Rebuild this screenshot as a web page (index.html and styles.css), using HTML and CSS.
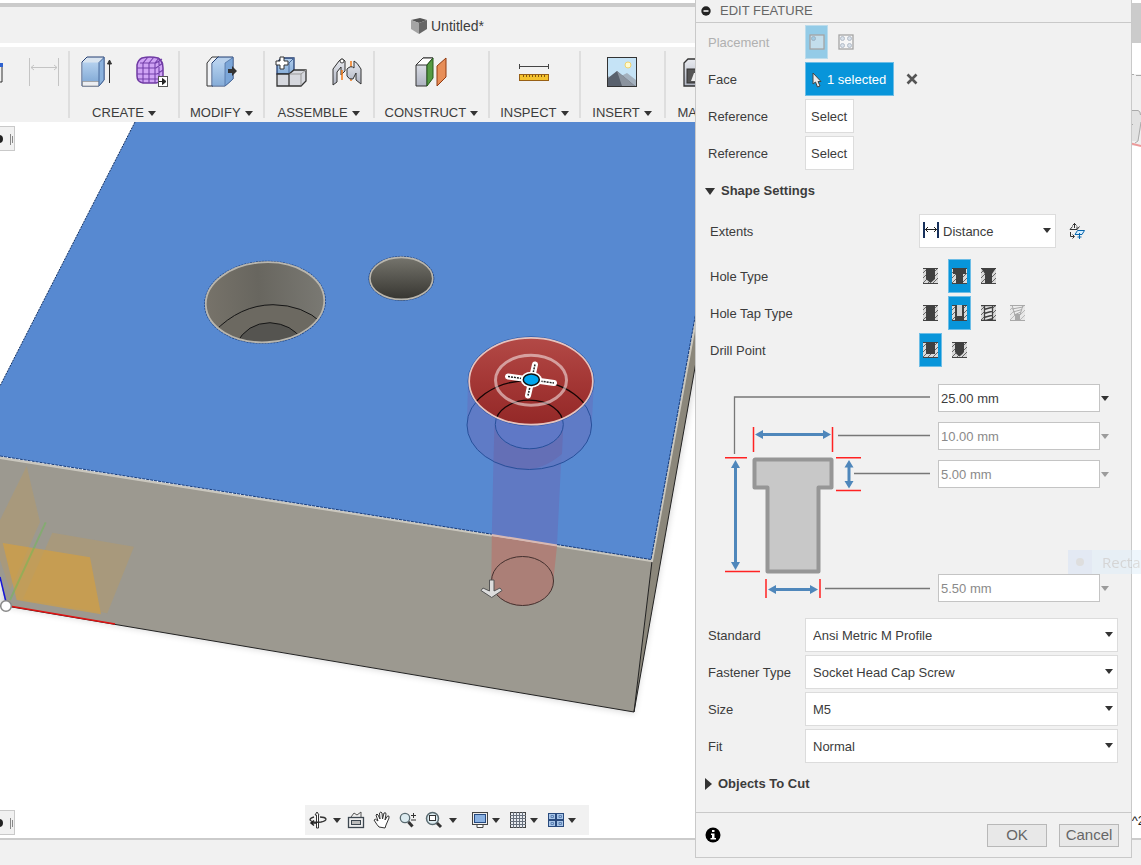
FILE: index.html
```html
<!DOCTYPE html>
<html lang="en">
<head>
<meta charset="utf-8">
<title>Untitled*</title>
<link rel="stylesheet" href="styles.css">
</head>
<body>
<svg class="defs" width="0" height="0" aria-hidden="true">
  <defs>
    <pattern id="hatch" width="5" height="5" patternUnits="userSpaceOnUse">
      <rect width="5" height="5" fill="#dadada"/>
      <path d="M-1 6L6 -1M-1 1L1 -1M4 6L6 4" stroke="#666" stroke-width="1"/>
    </pattern>
    <linearGradient id="glass" x1="0" y1="0" x2="0" y2="1"><stop offset="0" stop-color="#b4d0ee"/><stop offset="1" stop-color="#86add8"/></linearGradient>
    <linearGradient id="steel" x1="0" y1="0" x2="0" y2="1"><stop offset="0" stop-color="#e9ebf0"/><stop offset="1" stop-color="#aeb3c1"/></linearGradient>
  </defs>
</svg>
<div class="app">
  <header class="top">
    <div class="titlebar">
      <svg class="doc-icon" width="18" height="18" viewBox="0 0 18 18" aria-hidden="true">
        <path d="M1 3L10 1L17 3L9 6Z" fill="#555"/><path d="M1 3L9 6V17L1 12Z" fill="#a4a4a4"/><path d="M9 6L17 3V12L9 17Z" fill="#666"/>
      </svg>
      <h1 class="doc-title">Untitled*</h1>
    </div>
    <div class="title-end"></div>
  </header>

  <nav class="ribbon" aria-label="Tools">
    <section class="group group-first">
      <div class="tools">
        <svg width="4" height="32" viewBox="0 0 4 32"><path d="M0 9H2V26H0" fill="none" stroke="#333"/><rect x="0" y="7" width="3" height="4" fill="#2f62d0"/></svg>
        <svg width="32" height="32" viewBox="0 0 32 32"><path d="M1.500 2V30M30.500 2V30M3 11.500H29M6 9L3 11.500L6 14M26 9L29 11.500L26 14" fill="none" stroke="#c4c4c4"/></svg>
      </div>
    </section>
    <section class="group">
      <div class="tools">
        <svg width="32" height="32" viewBox="0 0 32 32"><path d="M2 6L7 1H24V24L19 30H2Z" fill="#d9e4f0" stroke="#243f72"/><path d="M2.500 6.500H19V25H2.500Z" fill="url(#glass)"/><path d="M2.500 25.500H19V30H2.500Z" fill="#eceef2" stroke="#777" stroke-width=".6"/><path d="M19 6.500L24 1.500V24L19 30Z" fill="#8bb2dd" stroke="#4a6a9c"/><path d="M29.500 27V5M27.500 8L29.500 4L31.500 8Z" stroke="#333" fill="#333"/></svg>
        <svg width="32" height="32" viewBox="0 0 32 32"><path d="M6 2Q14 0 22 2Q27 5 27 12V20Q26 26 20 27H7Q1 26 1 20V9Q2 4 6 2Z" fill="#cfa3f5" stroke="#6f3aa3" stroke-width="1.500"/><path d="M1 12H20L27 7M1 18H21L27 14M2 23H22L27 20M7 7V27M13 7V27M19 7V27M4 7H20L26 3M7 7L12 1M13 7L18 1M19 7L23 2M23 5V25" fill="none" stroke="#7340aa" stroke-width="1.100"/><rect x="22.500" y="20.500" width="9" height="10" fill="#fff" stroke="#555"/><path d="M23 25.500H29M26.500 22.500L30 25.500L26.500 28.500Z" stroke="#222" fill="#222"/></svg>
      </div>
      <button class="menu" type="button">CREATE<i class="tri"></i></button>
    </section>
    <section class="group">
      <div class="tools">
        <svg width="32" height="32" viewBox="0 0 32 32"><path d="M2 7L7 1H14L8 7V30H2Z" fill="#f1f3f6" stroke="#333"/><path d="M7 7L13 1H28V23L20 30H7Z" fill="#b7d0ec" stroke="#203c70"/><path d="M7.500 7H20V29.500H7.500Z" fill="url(#glass)"/><path d="M20 7L28 1.500V23L20 30Z" fill="#7ba6d8" stroke="#47699b" stroke-width=".7"/><path d="M23 13H27V10L32 15L27 20V17H23Z" fill="#333"/></svg>
      </div>
      <button class="menu" type="button">MODIFY<i class="tri"></i></button>
    </section>
    <section class="group">
      <div class="tools">
        <svg width="32" height="32" viewBox="0 0 32 32"><path d="M2 7L6 2H19V14L15 18H2Z" fill="url(#glass)" stroke="#233e72" stroke-width="1.300"/><path d="M14 7L19 2M14 7V18" stroke="#47699b"/><path d="M2 18H14V30H2ZM14 18L19 14H31V25L26 30H14Z" fill="#d6d8de" stroke="#333" stroke-width="1.300"/><path d="M14.700 18H26V29.300M26 18L31 14" fill="none" stroke="#999"/><path d="M5 1H9V5H13V9H9V13H5V9H1V5H5Z" fill="#fff" stroke="#333"/></svg>
        <svg width="32" height="32" viewBox="0 0 32 32"><path d="M2 13L8 5Q11 1 14 5V15L10 19V11L6 16V26L2 29Z" fill="url(#steel)" stroke="#333"/><circle cx="11" cy="5" r="2" fill="#fff" stroke="#444"/><path d="M11 14V24M20 5V25" stroke="#f47a16" stroke-width="1.500"/><path d="M16 13Q20 9 23 12V5Q26 6 30 13V28L25 24V17L22 23Q18 24 16 20Z" fill="url(#steel)" stroke="#333"/></svg>
      </div>
      <button class="menu" type="button">ASSEMBLE<i class="tri"></i></button>
    </section>
    <section class="group">
      <div class="tools">
        <svg width="32" height="32" viewBox="0 0 32 32"><path d="M1 9L8 2H18L12 9V30H1Z" fill="url(#steel)" stroke="#333"/><path d="M1 9L8 2H18L12 9Z" fill="#fff" stroke="#333"/><path d="M12 9L18 2V22L12 30Z" fill="#559b43" stroke="#265a1d"/><path d="M22 10L31 2V21L22 30Z" fill="#e78e58" stroke="#923a10"/></svg>
      </div>
      <button class="menu" type="button">CONSTRUCT<i class="tri"></i></button>
    </section>
    <section class="group">
      <div class="tools">
        <svg width="32" height="32" viewBox="0 0 32 32"><path d="M1.500 8V13M30.500 8V13M2 10.500H30" stroke="#444"/><rect x="1.500" y="18.500" width="29" height="6" fill="#f4c22d" stroke="#986015"/><path d="M5.500 19V21M8.500 19V21M11.500 19V21M14.500 19V21M17.500 19V21M20.500 19V21M23.500 19V21M26.500 19V21" stroke="#825411"/></svg>
      </div>
      <button class="menu" type="button">INSPECT<i class="tri"></i></button>
    </section>
    <section class="group group-insert">
      <div class="tools">
        <svg width="32" height="32" viewBox="0 0 32 32"><rect x="1.500" y="1.500" width="29" height="29" fill="#c5e3f6" stroke="#333"/><circle cx="22" cy="9" r="3" fill="#fffbd0" stroke="#f2d36d"/><path d="M2 20L6 22L11 15L15 20L21 17L30 24V30H2Z" fill="#a4b1be"/><path d="M2 22L11 15L17 20L29 30H2Z" fill="#59616d"/><path d="M11 15L17 20L29 30H16Z" fill="#8b939e"/></svg>
      </div>
      <button class="menu" type="button">INSERT<i class="tri"></i></button>
    </section>
    <section class="group group-make">
      <div class="tools">
        <svg width="32" height="32" viewBox="0 0 32 32"><path d="M2 7L6 3H28V26L25 30H2Z" fill="url(#steel)" stroke="#333" stroke-width="1.300"/><rect x="5" y="13" width="20" height="14" fill="#555" stroke="#333"/><path d="M9 25L12 17H20V25Z" fill="#eee"/></svg>
      </div>
      <button class="menu" type="button">MAKE<i class="tri"></i></button>
    </section>
  </nav>

  <main class="canvas">
    <svg class="scene" viewBox="0 122 1141 716" preserveAspectRatio="xMinYMin slice" role="img" aria-label="Plate with two holes and a counterbore preview">
      <defs>
        <linearGradient id="bore" x1="0" y1="0" x2="1" y2="0"><stop offset="0" stop-color="#77736a"/><stop offset=".45" stop-color="#68665f"/><stop offset="1" stop-color="#7a7973"/></linearGradient>
        <linearGradient id="pit" x1="0" y1="0" x2="0" y2="1"><stop offset="0" stop-color="#77766e"/><stop offset="1" stop-color="#35342f"/></linearGradient>
        <linearGradient id="red" x1="0" y1="0" x2="0" y2="1"><stop offset="0" stop-color="#b34a47"/><stop offset=".5" stop-color="#a43735"/><stop offset="1" stop-color="#932827"/></linearGradient>
        <clipPath id="clipBore"><ellipse cx="265" cy="302" rx="59" ry="40" transform="rotate(-3 265 302)"/></clipPath>
        <clipPath id="clipRed"><ellipse cx="531" cy="381" rx="62" ry="43.500"/></clipPath>
        <filter id="soft" x="-5%" y="-5%" width="110%" height="115%"><feGaussianBlur stdDeviation="3"/></filter>
      </defs>
      <path d="M0 606L634 714L696 376V330L640 550L0 480Z" fill="#000" opacity=".14" filter="url(#soft)"/>
      <path d="M135 122H730L652 560L0 456V386Z" fill="#5789d1"/>
      <path d="M135 122L0 386" stroke="#16315f" stroke-dasharray="2 1"/>
      <path d="M0 457L652 561L634 712L6 606L0 577Z" fill="#9c9990"/>
      <path d="M652 560L730 130V170L634 712Z" fill="#8b877b"/>
      <path d="M652 561L634 712L730 170" fill="none" stroke="#222"/>
      <path d="M6 606L634 712" stroke="#222"/>
      <path d="M0 458L652 561L730 134" fill="none" stroke="#cac7be" stroke-width="2"/>
      <path d="M0 456L651 559.500L729 130" fill="none" stroke="#183b78" stroke-dasharray="3 1"/>

      <path d="M0 520L26.700 466L40 522L10 590L0 560Z" fill="#c59a50" opacity=".3"/>
      <path d="M52.300 532.700L134 546.700L107.300 613.300L23 599Z" fill="#c59a50" opacity=".3"/>
      <path d="M2.700 543L90 557.300L101 614.300L16.700 600Z" fill="#d99f39" opacity=".62"/>
      <path d="M45.700 522.300L10 600" stroke="#6dbb55" stroke-width="2" opacity=".5"/>
      <path d="M0 577L6 602" stroke="#1717d8" stroke-width="1.500"/>
      <path d="M12 606.500L115 624" stroke="#e01212" stroke-width="1.500"/>
      <circle cx="6" cy="606" r="5.300" fill="#fff" stroke="#888" stroke-width="1.500"/>

      <ellipse cx="265" cy="302.300" rx="60" ry="41" transform="rotate(-3 265 302)" fill="url(#bore)"/>
      <g clip-path="url(#clipBore)">
        <path d="M214 332Q240 305 273 304.700Q303 305 322 323V350H214Z" fill="#6c6961" stroke="#161616"/>
        <path d="M236 344Q247 323 270 322.700Q292 324 302 340V350H236Z" fill="#555450" stroke="#161616"/>
      </g>
      <ellipse cx="265" cy="302.300" rx="60.500" ry="41" transform="rotate(-3 265 302)" fill="none" stroke="#1f4688" stroke-dasharray="2 1"/>
      <ellipse cx="265" cy="302.300" rx="59.300" ry="40" transform="rotate(-3 265 302)" fill="none" stroke="#b9b6ae" stroke-width="1.800"/>
      <ellipse cx="401.300" cy="278.400" rx="32.500" ry="22" fill="url(#pit)" stroke="#1f4688" stroke-dasharray="2 1"/>
      <ellipse cx="401.300" cy="278.400" rx="31.400" ry="21" fill="none" stroke="#b9b6ae" stroke-width="1.600"/>

      <path d="M468 381L467 425A62.300 44.500 0 0 0 591.700 425L594 381Z" fill="#5f7bc6"/>
      <path d="M494.300 423H563L557 545.500L491.800 535Z" fill="#6079c3"/>
      <path d="M494.500 424A34 24.300 0 0 0 563.300 424L562 454Q530 481 493.500 462Z" fill="#646fb6"/>
      <path d="M491.800 536L557 546L553.300 581A31 24.500 0 0 1 491.300 581Z" fill="#ae8078"/>
      <path d="M491.800 535L557 545.500" stroke="#d9b9b3" stroke-width="2"/>
      <ellipse cx="522.500" cy="581" rx="31" ry="24.500" fill="#ab7f77" stroke="#43302e"/>
      <ellipse cx="529.300" cy="425" rx="62.300" ry="44.500" fill="none" stroke="#27509b"/>
      <ellipse cx="529.300" cy="424.500" rx="34" ry="24.300" fill="#5f78c6" stroke="#27509b"/>
      <ellipse cx="531" cy="381.300" rx="62.500" ry="44" fill="url(#red)"/>
      <g clip-path="url(#clipRed)" fill="none" stroke="#160505" stroke-width="1.300">
        <ellipse cx="529.300" cy="425" rx="62.300" ry="44.500"/>
        <ellipse cx="529.300" cy="424.500" rx="34" ry="24.300"/>
      </g>
      <ellipse cx="531" cy="381.300" rx="63" ry="44.500" fill="none" stroke="#2c57a5"/>
      <ellipse cx="531" cy="381.300" rx="61.800" ry="43.400" fill="none" stroke="#e6c4bf" stroke-width="1.700"/>
      <ellipse cx="531" cy="380.300" rx="35.500" ry="25" fill="none" stroke="#fff" stroke-width="3" opacity=".5"/>
      <path d="M535 364.500L528 395.500M508 376.500L554 383" stroke="#fff" stroke-width="6" stroke-linecap="round"/>
      <path d="M535 364.500L528 395.500M508 376.500L554 383" stroke="#222" stroke-width="1.500" stroke-dasharray="2 1"/>
      <ellipse cx="531.300" cy="379.700" rx="10.500" ry="8" fill="#fff"/>
      <ellipse cx="531.300" cy="379.700" rx="8" ry="5.700" fill="#00a6ee" stroke="#111" stroke-width="1.500"/>
      <path d="M489.500 580H494V591L500 588L502 590.500L491.700 597.500L481 590.500L483 588L489.500 591Z" fill="#ddd" stroke="#555"/>
    </svg>
    <button class="tab tab-top" type="button" aria-label="Expand browser"><svg width="14" height="24" viewBox="0 0 14 24"><circle cx="-1" cy="12" r="4" fill="#222"/><path d="M10.500 7V18M12.500 9V16" stroke="#888"/></svg></button>
    <button class="tab tab-bottom" type="button" aria-label="Expand comments"><svg width="14" height="24" viewBox="0 0 14 24"><circle cx="-1" cy="12" r="4" fill="#222"/><path d="M10.500 7V18M12.500 9V16" stroke="#888"/></svg></button>
    <div class="navbar">
      <svg width="18" height="18" viewBox="0 0 18 18"><path d="M8 1L10 4H9.500V17H7.500V4H6Z" fill="#fff" stroke="#333"/><path d="M5 6Q1 7 1 9Q3 12 12 11Q17 10 17 8Q16 6 11 6" fill="none" stroke="#333" stroke-width="1.300"/><path d="M2 12H8M5 9.500L2 12L5 14.500" fill="none" stroke="#222" stroke-width="1.500"/></svg>
      <i class="tri"></i>
      <svg width="18" height="18" viewBox="0 0 18 18"><path d="M4 6L7 2L10 4L14 1V6" fill="#eee" stroke="#555"/><rect x="1.500" y="6.500" width="15" height="10" fill="#eee" stroke="#3d4750" stroke-width="1.300"/><rect x="4.500" y="9.500" width="9" height="4" fill="#bbb" stroke="#3d4750"/></svg>
      <svg class="hand" width="18" height="18" viewBox="0 0 18 18"><path d="M6 16Q4 14 1 9Q2 7 5 10L3 4Q4 2 5 4L7 8L6.500 2Q8 0 9 2L9.500 8L11 2Q13 1 13 3L12 9L14.500 5Q16.500 4 16 7L13 14L12 17Z" fill="#fff" stroke="#333"/></svg>
      <svg width="18" height="18" viewBox="0 0 18 18"><circle cx="6" cy="7" r="4.700" fill="#dcebf0" stroke="#596a70" stroke-width="1.300"/><path d="M9.500 11L13.500 15.500" stroke="#333" stroke-width="3"/><path d="M12 4.500H17M14.500 2V7M12 9H17" stroke="#333"/></svg>
      <svg class="zoom-fit" width="18" height="18" viewBox="0 0 18 18"><circle cx="7.500" cy="7.500" r="6" fill="#dcebf0" stroke="#596a70" stroke-width="1.500"/><rect x="4.500" y="4.500" width="6" height="5" fill="#fff" stroke="#333"/><path d="M12 12L16 16" stroke="#333" stroke-width="3"/></svg>
      <i class="tri"></i>
      <span class="view-menu view-menu-first"><svg width="18" height="18" viewBox="0 0 18 18"><rect x="1.500" y="1.500" width="15" height="12" fill="#eee" stroke="#444"/><rect x="3.500" y="3.500" width="11" height="8" fill="#8ab1e2" stroke="#274a80"/><path d="M6 14V16.500H12V14" fill="#fff" stroke="#444"/></svg><i class="tri"></i></span>
      <span class="view-menu"><svg width="18" height="18" viewBox="0 0 18 18"><rect x="1.500" y="1.500" width="15" height="15" fill="#e9ecf1" stroke="#444"/><path d="M4.500 1V17M7.500 1V17M10.500 1V17M13.500 1V17M1 4.500H17M1 7.500H17M1 10.500H17M1 13.500H17" stroke="#68707c"/></svg><i class="tri"></i></span>
      <span class="view-menu"><svg width="18" height="18" viewBox="0 0 18 18"><g fill="#a8c5e8" stroke="#294a7d"><rect x="1.500" y="2.500" width="7" height="6"/><rect x="9.500" y="2.500" width="7" height="6"/><rect x="1.500" y="9.500" width="7" height="6"/><rect x="9.500" y="9.500" width="7" height="6"/></g><path d="M4 4.500H6.500V6.500H4ZM12 4.500H14.500V6.500H12ZM4 11.500H6.500V13.500H4ZM12 11.500H14.500V13.500H12Z" fill="none" stroke="#5e83b5"/></svg><i class="tri"></i></span>
    </div>
    <span class="unit">^2</span>
  </main>
  <footer class="status"></footer>

  <svg class="viewcube" width="10" height="80" viewBox="0 0 10 80" aria-hidden="true">
    <path d="M0 4H10V76H0Z" fill="#f0f0f0"/>
    <path d="M0 40H7Q10 41 10 45V58L7 71H0Z" fill="#e2e2e2"/>
    <path d="M0 4.500H3M5 5.500H10M0 40.500H7Q9.500 41 9.500 45M0 54.500H2M10 52L7 71L4 73" fill="none" stroke="#aaa"/>
    <path d="M0 73.500L10 76" stroke="#ed9a9a" stroke-width="2"/>
  </svg>

  <form class="dialog" aria-label="Edit feature">
    <div class="dialog-head">
      <svg width="10" height="10" viewBox="0 0 10 10" aria-hidden="true"><circle cx="5" cy="5" r="4.700" fill="#222"/><path d="M2.500 5H7.500" stroke="#fff" stroke-width="1.500"/></svg>
      <h2 class="dialog-title">EDIT FEATURE</h2>
    </div>

    <div class="rows">
      <div class="row">
        <span class="label label-off">Placement</span>
        <div class="toggles">
          <button class="toggle toggle-on toggle-dim" type="button" aria-label="Single hole" aria-pressed="true"><svg width="16" height="16" viewBox="0 0 16 16"><rect x="1" y="1" width="14" height="14" fill="#7fc3e6" stroke="#333" stroke-width="1.300"/><circle cx="4.500" cy="4.500" r="2" fill="#2692cc" stroke="#25537d"/></svg></button>
          <button class="toggle toggle-dim" type="button" aria-label="Multiple holes"><svg width="16" height="16" viewBox="0 0 16 16"><rect x="1" y="1" width="14" height="14" fill="#fff" stroke="#333" stroke-width="1.300"/><g fill="#b7cae0" stroke="#566d8a"><circle cx="4.500" cy="4.500" r="2"/><circle cx="11.500" cy="4.500" r="2"/><circle cx="4.500" cy="11.500" r="2"/><circle cx="11.500" cy="11.500" r="2"/></g></svg></button>
        </div>
      </div>
      <div class="row">
        <span class="label">Face</span>
        <button class="pick pick-on" type="button"><svg width="10" height="16" viewBox="0 0 10 16" aria-hidden="true"><path d="M1 1V12L3.500 10L5.500 15L8 14L6 9.500H9Z" fill="#eee" stroke="#444"/></svg>1 selected</button>
        <button class="clear" type="button" aria-label="Clear face"><svg width="12" height="12" viewBox="0 0 12 12"><path d="M1.500 1.500L10.500 10.500M10.500 1.500L1.500 10.500" stroke="#555" stroke-width="2.600"/></svg></button>
      </div>
      <div class="row"><span class="label">Reference</span><button class="pick" type="button">Select</button></div>
      <div class="row"><span class="label">Reference</span><button class="pick" type="button">Select</button></div>
      <button class="fold" type="button" aria-expanded="true"><i class="tri tri-big"></i>Shape Settings</button>
    </div>

    <div class="rows rows-shape">
      <div class="row row-extents">
        <label class="label" for="extents">Extents</label>
        <span class="drop drop-short">
          <svg class="drop-icon" width="16" height="16" viewBox="0 0 16 16" aria-hidden="true"><path d="M1 0V16M15 0V16" stroke="#17315c" stroke-width="2"/><path d="M2 7.500H14M5 5L2.500 7.500L5 10M11 5L13.500 7.500L11 10" fill="none" stroke="#222"/></svg>
          <select id="extents" class="select select-icon"><option>Distance</option></select>
        </span>
        <button class="flip" type="button" aria-label="Flip direction"><svg width="16" height="16" viewBox="0 0 16 16"><path d="M5.500 0V5M3.500 2.500L5.500 .5L7.500 2.500M1 6.500H8L10.500 3.500M1 6.500L3.500 3.500M8 6.500V3.500M1.500 9V13.500H5M3.500 11.500L5.500 13.500L3.500 15.500" fill="none" stroke="#333"/><path d="M8.500 7.500H15.500L13 11.500H6Z" fill="#d5edff" stroke="#0867ad"/><path d="M10.500 10V16M8.500 14H12.500" stroke="#0867ad"/></svg></button>
      </div>
      <div class="row">
        <span class="label">Hole Type</span>
        <div class="toggles">
          <button class="toggle" type="button" aria-label="Simple"><svg width="16" height="16" viewBox="0 0 16 16"><rect width="15" height="16" fill="url(#hatch)"/><path d="M0 .5H15M0 15.500H15" stroke="#444"/><path d="M3 0H12V11L7.500 15L3 11Z" fill="#404040"/></svg></button>
          <button class="toggle toggle-on" type="button" aria-label="Counterbore" aria-pressed="true"><svg width="16" height="16" viewBox="0 0 16 16"><rect width="15" height="16" fill="url(#hatch)"/><path d="M0 .5H15M0 15.500H15" stroke="#444"/><path d="M1 0H14V6H11V16H4V6H1Z" fill="#404040"/></svg></button>
          <button class="toggle" type="button" aria-label="Countersink"><svg width="16" height="16" viewBox="0 0 16 16"><rect width="15" height="16" fill="url(#hatch)"/><path d="M0 .5H15M0 15.500H15" stroke="#444"/><path d="M0 0H15L11 6V16H4V6Z" fill="#404040"/></svg></button>
        </div>
      </div>
      <div class="row">
        <span class="label">Hole Tap Type</span>
        <div class="toggles">
          <button class="toggle" type="button" aria-label="Simple tap"><svg width="16" height="16" viewBox="0 0 16 16"><rect width="15" height="16" fill="url(#hatch)"/><path d="M0 .5H15M0 15.500H15" stroke="#444"/><rect x="3" width="9" height="16" fill="#404040"/></svg></button>
          <button class="toggle toggle-on" type="button" aria-label="Clearance" aria-pressed="true"><svg width="16" height="16" viewBox="0 0 16 16"><rect width="15" height="16" fill="url(#hatch)"/><path d="M0 .5H15M0 15.500H15" stroke="#444"/><rect x="3" width="9" height="16" fill="#404040"/><rect x="5" width="5" height="11" fill="#d0d0d0"/></svg></button>
          <button class="toggle" type="button" aria-label="Tapped"><svg width="16" height="16" viewBox="0 0 16 16"><rect width="15" height="16" fill="url(#hatch)"/><rect x="4" width="7" height="16" fill="#e6e6e6"/><path d="M0 .5H15M0 15.500H15M3.500 0V16M11.500 0V16M3 4.500L12 2M3 8.500L12 6M3 12.500L12 10M3 16L12 13.500" stroke="#404040" stroke-width="1.300"/></svg></button>
          <button class="toggle" type="button" aria-label="Taper tapped" disabled><svg width="16" height="16" viewBox="0 0 16 16"><rect width="15" height="16" fill="url(#hatch)"/><path d="M1 0H14L10 9H5Z" fill="#e8e8e8"/><path d="M0 .5H15M0 15.500H15M2 4L13 2M3 7L12 4.500M4 10L11 7M2 0L5 10M13 0L10 10" stroke="#404040"/><path d="M5 9H10V16H5Z" fill="#404040"/></svg></button>
        </div>
      </div>
      <div class="row">
        <span class="label">Drill Point</span>
        <div class="toggles">
          <button class="toggle toggle-on" type="button" aria-label="Flat" aria-pressed="true"><svg width="16" height="16" viewBox="0 0 16 16"><rect width="15" height="16" fill="url(#hatch)"/><path d="M0 .5H15M0 15.500H15" stroke="#444"/><rect x="3" width="9" height="12" fill="#404040"/></svg></button>
          <button class="toggle" type="button" aria-label="Angle"><svg width="16" height="16" viewBox="0 0 16 16"><rect width="15" height="16" fill="url(#hatch)"/><path d="M0 .5H15M0 15.500H15" stroke="#444"/><path d="M3 0H12V10Q11 12 7.500 14.500Q4 12 3 10Z" fill="#404040"/></svg></button>
        </div>
      </div>
    </div>

    <div class="sizes">
      <svg class="profile" width="216" height="218" viewBox="719 384 216 218" aria-hidden="true">
        <path d="M734.500 454V397H930M838 435.500H930M854 473.500H930M825 588.500H930" fill="none" stroke="#777" stroke-width="1.300"/>
        <path d="M755 459.500H831Q831.500 459.500 831.500 460V487.500H818.500V571.500H767.500V487.500H754.500V460Z" fill="#c8c8c8" stroke="#969696" stroke-width="4" stroke-linejoin="round"/>
        <path d="M753.500 427V452M832.500 427V452M725 457.800H747M836 457.800H861M836 490.500H861M725 571.500H760M766 579V598M820 579V598" stroke="#f22" stroke-width="1.500"/>
        <path d="M759 434.500H827M735.500 464V566M849 464V484M772 589.500H814" stroke="#4f87bb" stroke-width="3"/>
        <path d="M755 434.500L763 430V439ZM831 434.500L823 430V439ZM735.500 460L731 468H740ZM735.500 570L731 562H740ZM849 460L844.500 467.500H853.500ZM849 488.500L844.500 481H853.500ZM768 589.500L776 585V594ZM818 589.500L810 585V594Z" fill="#4f87bb"/>
      </svg>
      <div class="size"><input class="field" type="text" value="25.00 mm" aria-label="Hole depth"><button class="more" type="button" aria-label="Hole depth options"><i class="tri"></i></button></div>
      <div class="size"><input class="field" type="text" value="10.00 mm" aria-label="Counterbore diameter" disabled><button class="more" type="button" aria-label="Counterbore diameter options" disabled><i class="tri"></i></button></div>
      <div class="size"><input class="field" type="text" value="5.00 mm" aria-label="Counterbore depth" disabled><button class="more" type="button" aria-label="Counterbore depth options" disabled><i class="tri"></i></button></div>
      <div class="size size-last"><input class="field" type="text" value="5.50 mm" aria-label="Hole diameter" disabled><button class="more" type="button" aria-label="Hole diameter options" disabled><i class="tri"></i></button></div>
    </div>

    <div class="rows rows-fastener">
      <div class="row"><label class="label" for="standard">Standard</label><span class="drop"><select id="standard" class="select"><option>Ansi Metric M Profile</option></select></span></div>
      <div class="row"><label class="label" for="fastener">Fastener Type</label><span class="drop"><select id="fastener" class="select"><option>Socket Head Cap Screw</option></select></span></div>
      <div class="row"><label class="label" for="size">Size</label><span class="drop"><select id="size" class="select"><option>M5</option></select></span></div>
      <div class="row"><label class="label" for="fit">Fit</label><span class="drop"><select id="fit" class="select"><option>Normal</option></select></span></div>
      <button class="fold" type="button" aria-expanded="false"><i class="tri-right"></i>Objects To Cut</button>
    </div>

    <div class="dialog-foot">
      <svg width="16" height="16" viewBox="0 0 16 16" aria-hidden="true"><circle cx="8" cy="8" r="7.500" fill="#000"/><path d="M7 3H9.500V5H7ZM6 6.500H9.500V11H11V12.500H5.500V11H7V8H6Z" fill="#fff"/></svg>
      <span class="spacer"></span>
      <button class="action" type="button">OK</button>
      <button class="action" type="button">Cancel</button>
    </div>
  </form>
  <div class="ghost" aria-hidden="true"><span class="ghost-mark"><i class="ghost-dot"></i></span><span class="ghost-text">Recta</span></div>
</div>
</body>
</html>
```
FILE: styles.css
```css
* { box-sizing: border-box; }

body {
  margin: 0;
  font: 13px/16px "Liberation Sans", Arial, sans-serif;
  color: #3c3c3c;
  background: #fff;
}

button, input, select {
  font: inherit;
  color: inherit;
  margin: 0;
  padding: 0;
  border: 0;
  background: none;
}

h1, h2 { margin: 0; font-weight: normal; }
svg { display: block; flex: none; }
.defs { position: absolute; }

.app {
  position: relative;
  display: flex;
  flex-direction: column;
  min-height: 100vh;
  overflow: hidden;
}

.tri {
  flex: none;
  border: 4px solid transparent;
  border-top: 5px solid #333;
  border-bottom: 0;
}

.tri-big { border-width: 7px 5px 0; }

.tri-right {
  border: 6px solid transparent;
  border-left: 7px solid #333;
  border-right: 0;
}

/* Window frame */
.top { display: flex; height: 40px; margin-top: 3px; }

.titlebar {
  flex: 1;
  display: flex;
  align-items: center;
  gap: 3px;
  padding: 2px 0 0 410px;
  border-top: 4px solid #cbcbcb;
  background: #f1f1f1;
}

.doc-title { font-size: 14px; }
.title-end { width: 10px; background: #cbcbcb; }

.ribbon {
  display: flex;
  height: 75px;
  margin: 4px 10px 0 0;
  padding: 4px 0;
  background: #f1f1f1;
  overflow: hidden;
}

.group {
  flex: none;
  display: flex;
  flex-direction: column;
  align-items: center;
  justify-content: space-between;
  padding: 5px 10px 0;
  border-right: 2px solid #dedede;
}

.group-first { width: 70px; padding: 5px 13px 0 0; align-items: stretch; }
.group-first .tools { justify-content: space-between; }
.group-insert { min-width: 85px; }
.group-make { padding-left: 12px; align-items: flex-start; }
.group-make .tools { padding-left: 4px; }
.tools { display: flex; gap: 24px; }
.menu { display: flex; align-items: center; gap: 4px; line-height: 10px; }

.canvas { position: relative; flex: 1; min-height: 716px; overflow: hidden; }
.scene { position: absolute; inset: 0; width: 100%; height: 100%; }

.tab {
  position: absolute;
  left: 0;
  width: 15px;
  height: 25px;
  background: #f1f1f1;
  border: 1px solid #c9c9c9;
  border-left: 0;
}

.tab-top { top: 4px; }
.tab-bottom { bottom: 3px; }

.navbar {
  position: absolute;
  left: 305px;
  bottom: 3px;
  display: flex;
  align-items: center;
  height: 30px;
  padding: 0 13px 0 4px;
  gap: 6px;
  background: #f1f1f1;
}

.hand { margin: 0 2px; }
.zoom-fit { margin-left: 2px; }
.view-menu { display: flex; align-items: center; gap: 3px; margin-left: 3px; }
.view-menu-first { margin-left: 8px; }

.unit { position: absolute; right: -4px; bottom: 9px; color: #222; }
.status { height: 27px; background: #f1f1f1; border-top: 2px solid #cbcbcb; }

.viewcube { position: absolute; top: 70px; right: 0; }

/* Floating dialog */
.dialog {
  position: absolute;
  top: 0;
  right: 9px;
  width: 437px;
  background: #f1f1f1;
  border: 1px solid #c9c9c9;
  border-top: 0;
}

.dialog-head {
  display: flex;
  align-items: center;
  gap: 9px;
  height: 23px;
  padding: 0 5px 1px;
  border-bottom: 1px solid #c9c9c9;
}

.dialog-title { font-size: 13px; color: #666; }

.rows { display: grid; gap: 3px; padding: 2px 13px 0 12px; }
.rows-shape { padding: 7px 13px 0 14px; }
.rows-fastener { padding-top: 16px; }
.row { display: flex; align-items: center; height: 34px; }
.row-extents { margin-bottom: 8px; }
.label { flex: none; width: 97px; padding-top: 2px; }
.rows-shape .label { width: 209px; }
.label-off { color: #b0b0b0; }

.toggles { display: flex; gap: 6px; }

.toggle {
  width: 23px;
  height: 34px;
  display: flex;
  align-items: center;
  padding-left: 3px;
  border: 1px solid transparent;
}

.toggle-on { background: #0895da; border-color: #6cbde6; }
.toggle-dim { opacity: .4; }
.toggle:disabled { opacity: .4; }

.pick {
  display: flex;
  align-items: center;
  gap: 5px;
  height: 34px;
  padding: 2px 6px 0 5px;
  background: #fff;
  border: 1px solid #dcdcdc;
}

.pick-on { padding: 2px 7px 0 6px; color: #fff; background: #0895da; border-color: #6cbde6; }
.clear { margin-left: 12px; }

.fold {
  display: flex;
  align-items: center;
  gap: 6px;
  height: 34px;
  margin-left: -3px;
  padding-top: 2px;
  font-weight: bold;
}

.drop { position: relative; flex: 1; height: 34px; }
.drop-short { flex: none; width: 137px; }

.drop::after {
  content: "";
  position: absolute;
  right: 5px;
  top: 14px;
  border: 4px solid transparent;
  border-top: 5px solid #333;
  border-bottom: 0;
  pointer-events: none;
}

.select {
  appearance: none;
  width: 100%;
  height: 100%;
  padding: 2px 7px 0;
  background: #fff;
  border: 1px solid #dcdcdc;
}

.select-icon { padding-left: 23px; }
.drop-icon { position: absolute; left: 4px; top: 8px; }
.flip { margin-left: 13px; }

.sizes {
  display: grid;
  grid-template-columns: 216px minmax(0, 1fr);
  grid-template-rows: repeat(6, 28px);
  gap: 10px 3px;
  padding: 17px 22px 0 23px;
}

.profile { grid-row: 1 / 7; grid-column: 1; }
.size { grid-column: 2; display: flex; align-items: center; gap: 1px; }
.size-last { grid-row: 6; }

.field {
  flex: 1;
  min-width: 0;
  height: 28px;
  padding: 0 2px;
  background: #fff;
  border: 1px solid #c4c4c4;
}

.field:disabled { color: #8a8a8a; }
.more { display: flex; }
.more:disabled { opacity: .45; }

.dialog-foot {
  display: flex;
  align-items: center;
  gap: 12px;
  height: 45px;
  margin-top: 12px;
  padding: 0 12px 0 9px;
  border-top: 1px solid #c9c9c9;
}

.spacer { flex: 1; }

.action {
  width: 60px;
  height: 23px;
  font-size: 15px;
  color: #666;
  background: #e8e8e8;
  border: 1px solid #b8b8b8;
}

/* Fading command hint */
.ghost {
  position: absolute;
  right: 0;
  top: 550px;
  width: 73px;
  height: 24px;
  display: flex;
  align-items: center;
  gap: 10px;
  background: #dfeefa;
  opacity: .5;
}

.ghost-mark {
  flex: none;
  width: 24px;
  height: 24px;
  display: flex;
  align-items: center;
  justify-content: center;
  background: #d6e2f5;
}

.ghost-dot { width: 8px; height: 8px; border-radius: 50%; background: #ccc; }
.ghost-text { font: 15px/20px "Open Sans", sans-serif; color: #bbb; }
```
